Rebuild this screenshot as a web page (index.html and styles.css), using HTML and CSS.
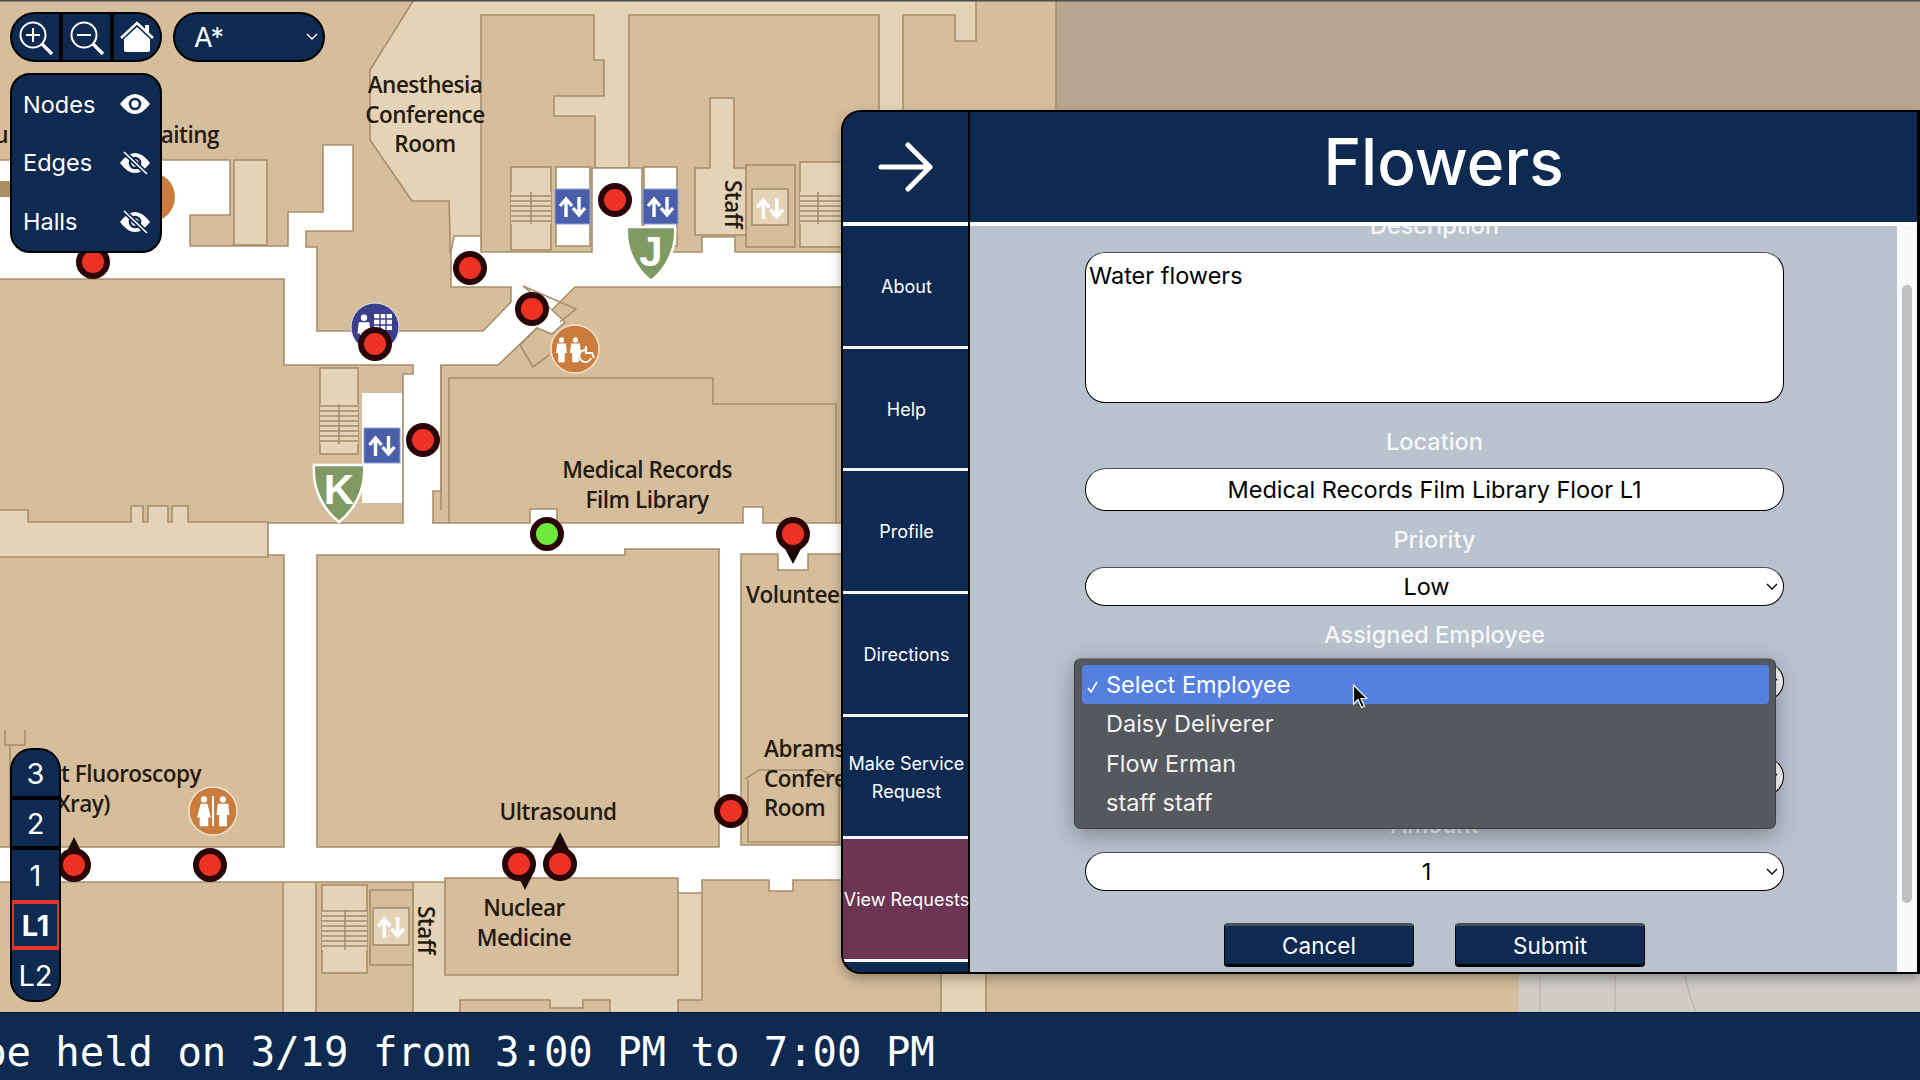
FILE: index.html
```html
<!DOCTYPE html>
<html lang="en">
<head>
<meta charset="utf-8">
<title>Flowers</title>
<link rel="stylesheet" href="styles.css">
</head>
<body>
<div class="app">
  <main class="map">
    <svg class="floorplan" viewBox="0 0 1920 1012" width="1920" height="1012" xmlns="http://www.w3.org/2000/svg">
      <defs>
        <pattern id="stairs" width="6" height="5" patternUnits="userSpaceOnUse"><rect width="6" height="5" class="f-light"/><line x1="0" y1="1" x2="6" y2="1" class="w-line"/></pattern>
        <symbol id="updown" viewBox="0 0 35 35"><path class="arrow" d="M11 28V13M5 17l6-7 6 7"/><path class="arrow" d="M24 8V23M18 19l6 7 6-7"/></symbol>
        <symbol id="person-m" viewBox="0 0 16 36"><circle cx="8" cy="4" r="3.6"/><path d="M2 9h12l1.5 13h-3v13h-9V22H.5z"/></symbol>
        <symbol id="person-f" viewBox="0 0 16 36"><circle cx="8" cy="4" r="3.6"/><path d="M4 9h8l4 16h-3v10H3V25H0z"/></symbol>
      </defs>
      <rect width="1920" height="1012" class="f-room"/>
      <rect x="1056" y="-2" width="870" height="400" class="f-dim w-line"/>
      <rect x="1519" y="960" width="410" height="60" class="f-grey"/>
      <path class="w-grey" d="M1540 975V1012M1615 975V1012M1685 975Q1690 1000 1696 1012"/>

      <path class="f-light w-line" d="M415 -2H976V41H955V15H903V120H879V15H629V168H595V116H554V96H604V60H594V15H481V252H450V236L449 201H412L370 140V70Z"/>
      <path class="f-light w-line" d="M695 168H710V98H734V168H746V235H695Z"/>
      <path class="f-light w-line" d="M-2 510H28V522H131V506H143V522H148V506H168V522H172V506H188V522H268V557H-2Z"/>
      <path class="f-light w-line" d="M283 880H316V1014H283ZM413 880H445V975H678V890H702V1000H678V1014H610V1000H583V1008H550V1000H460V1014H413ZM941 970H986V1014H941Z"/>

      <path class="f-white w-line" d="M-2 160H230V215H190V246H288V212H323V145H353V231H306V247H317V331H483L511 302V287H451V252L454 236H481V252H592V168H642V252H702V237H735V252H860V287H575L552 310L565 322L552 334L537 328L498 365H441V491H433V523H530V509H557V523H743V507H763V523H860V554H808V570H778V554H741V845H860V880H793V891H769V880H702V893H678V878H445V882H-2V847H284V555H268V523H403V374H413V365H284V279H-2Z"/>
      <path class="f-room w-line" d="M317 555H625V549H719V847H317Z"/>
      <rect x="234" y="160" width="33" height="85" class="f-light w-line"/>
      <rect x="-2" y="181" width="12" height="16" class="f-mark"/>
      <path class="o-line" d="M449 523V378H713V404H836V523M441 365V510M745 779L759 770H822L839 779V845M748 779V842H840"/>
      <path class="o-line" d="M5 730V745H25V730M10 745V847M523 286L576 309L560 322M523 286L551 309M537 328L520 345L533 367L549 355"/>

      <rect x="511" y="167" width="40" height="83" class="f-light w-line"/>
      <rect x="511" y="192" width="40" height="32" fill="url(#stairs)"/>
      <path class="o-line" d="M531 192V224"/>
      <rect x="556" y="167" width="34" height="79" class="f-white w-line"/>
      <rect x="644" y="167" width="33" height="79" class="f-white w-line"/>
      <rect x="555" y="189" width="35" height="35" class="f-blue"/><use href="#updown" x="555" y="189" width="35" height="35"/>
      <rect x="643" y="189" width="35" height="35" class="f-blue"/><use href="#updown" x="643" y="189" width="35" height="35"/>
      <rect x="746" y="165" width="49" height="82" class="f-room w-line"/>
      <rect x="752" y="189" width="36" height="36" class="f-light w-line"/><use href="#updown" x="752" y="190" width="36" height="36"/>
      <rect x="800" y="162" width="44" height="85" class="f-light w-line"/>
      <rect x="800" y="192" width="44" height="32" fill="url(#stairs)"/>
      <path class="o-line" d="M818 192V224"/>

      <rect x="320" y="368" width="38" height="86" class="f-light w-line"/>
      <rect x="320" y="404" width="38" height="40" fill="url(#stairs)"/>
      <path class="o-line" d="M339 404V444"/>
      <rect x="362" y="393" width="40" height="110" class="f-white"/>
      <rect x="364" y="428" width="36" height="35" class="f-blue"/><use href="#updown" x="364" y="428" width="36" height="35"/>

      <rect x="322" y="885" width="45" height="88" class="f-light w-line"/>
      <rect x="322" y="910" width="45" height="40" fill="url(#stairs)"/>
      <path class="o-line" d="M345 910V950"/>
      <rect x="370" y="890" width="43" height="75" class="f-room w-line"/>
      <rect x="373" y="908" width="36" height="37" class="f-light w-line"/><use href="#updown" x="373" y="909" width="36" height="36"/>

      <path class="f-green w-white" d="M627 227H675C677 250 665 270 651 281C637 270 625 250 627 227Z"/>
      <text class="shield-l" x="651" y="266">J</text>
      <path class="f-green w-white" d="M314 465C330 465 348 465 364 465C366 490 354 510 339 522C324 510 312 490 314 465Z"/>
      <text class="shield-l" x="339" y="504">K</text>

      <circle cx="150" cy="197" r="25" class="f-orange"/>
      <g>
        <circle cx="375" cy="327" r="24" class="f-indigo"/>
        <use href="#person-m" x="357" y="314" width="14" height="32" class="fig"/>
        <path class="f-white" d="M374 314h18v16h-18z"/>
        <path class="grid-l" d="M380 314v16M386 314v16M374 319h18M374 325h18"/>
      </g>
      <g>
        <circle cx="575" cy="349" r="24" class="f-orange w-soft"/>
        <use href="#person-m" x="555" y="337" width="13" height="26" class="fig"/>
        <use href="#person-m" x="569" y="337" width="13" height="26" class="fig"/>
        <path class="wheel" d="M585 350a6 6 0 1 0 6 8M586 346v7h6l2 5"/>
      </g>
      <g>
        <circle cx="213" cy="811" r="24" class="f-orange w-soft"/>
        <use href="#person-f" x="197" y="796" width="14" height="31" class="fig"/>
        <rect x="212" y="796" width="2" height="30" class="fig"/>
        <use href="#person-m" x="216" y="796" width="14" height="31" class="fig"/>
      </g>

      <text class="lbl" x="425" y="93">Anesthesia</text>
      <text class="lbl" x="425" y="123">Conference</text>
      <text class="lbl" x="425" y="152">Room</text>
      <text class="lbl end" x="219" y="143">Waiting</text>
      <text class="lbl end" x="8" y="143">u</text>
      <text class="lbl" x="647" y="478">Medical Records</text>
      <text class="lbl" x="647" y="508">Film Library</text>
      <text class="lbl start" x="746" y="603">Volunteer</text>
      <text class="lbl start" x="764" y="757">Abrams</text>
      <text class="lbl start" x="764" y="787">Conference</text>
      <text class="lbl start" x="764" y="816">Room</text>
      <text class="lbl" x="558" y="820">Ultrasound</text>
      <text class="lbl" x="524" y="916">Nuclear</text>
      <text class="lbl" x="524" y="946">Medicine</text>
      <text class="lbl end" x="201" y="782">o  t Fluoroscopy</text>
      <text class="lbl end" x="110" y="812">(Xray)</text>
      <text class="lbl" transform="translate(725 204) rotate(90)">Staff</text>
      <text class="lbl" transform="translate(418 930) rotate(90)">Staff</text>

      <path class="pin-tip" d="M74 837L64 857H84Z"/>
      <path class="pin-tip" d="M560 832L550 852H570Z"/>
      <path class="pin-tip" d="M525 890L515 870H535Z"/>
      <path class="pin-tip" d="M793 564L783 545H803Z"/>
      <circle cx="93" cy="262" r="14" class="dot"/>
      <circle cx="470" cy="268" r="14" class="dot"/>
      <circle cx="615" cy="200" r="14" class="dot"/>
      <circle cx="532" cy="309" r="14" class="dot"/>
      <circle cx="375" cy="344" r="14" class="dot"/>
      <circle cx="423" cy="440" r="14" class="dot"/>
      <circle cx="547" cy="534" r="14" class="dot dot-green"/>
      <circle cx="793" cy="534" r="14" class="dot"/>
      <circle cx="74" cy="865" r="14" class="dot"/>
      <circle cx="210" cy="865" r="14" class="dot"/>
      <circle cx="519" cy="864" r="14" class="dot"/>
      <circle cx="560" cy="864" r="14" class="dot"/>
      <circle cx="731" cy="811" r="14" class="dot"/>
      <rect width="1920" height="1.5" class="f-topline"/>
    </svg>

    <div class="tools">
      <div class="zoombar">
        <button class="tool-btn" type="button" aria-label="Zoom in">
          <svg viewBox="0 0 50 50" width="50" height="50"><circle cx="23" cy="23" r="12.5" class="i-thin"/><path class="i-thin" d="M23 16v14M16 23h14"/><path class="i-thick" d="M32 32l10 10"/></svg>
        </button>
        <button class="tool-btn" type="button" aria-label="Zoom out">
          <svg viewBox="0 0 50 50" width="50" height="50"><circle cx="23" cy="23" r="12.5" class="i-thin"/><path class="i-thin" d="M16 23h14"/><path class="i-thick" d="M32 32l10 10"/></svg>
        </button>
        <button class="tool-btn" type="button" aria-label="Home">
          <svg viewBox="0 0 50 50" width="50" height="50"><path class="i-fill" d="M12 27L25 15L38 27V38Q38 40 36 40H14Q12 40 12 38Z"/><path class="i-roof" d="M9 26L25 11L41 26"/><path class="i-fill" d="M33 13h4v8h-4z"/></svg>
        </button>
      </div>
      <div class="algo"><span>A*</span><svg class="chev" viewBox="0 0 12 8" width="12" height="8"><path d="M1 1l5 5 5-5"/></svg></div>
    </div>

    <div class="layers">
      <div class="layer-row"><span>Nodes</span>
        <svg viewBox="0 0 30 20" width="30" height="20"><path class="i-fill" d="M0 10Q15 -10 30 10Q15 30 0 10Z"/><circle cx="15" cy="10" r="5" class="i-pupil"/></svg>
      </div>
      <div class="layer-row"><span>Edges</span>
        <svg viewBox="0 0 30 24" width="30" height="24"><path class="i-fill" d="M0 12Q15 -8 30 12Q15 32 0 12Z"/><circle cx="15" cy="12" r="5" class="i-pupil"/><path class="i-slash-b" d="M4 1L27 23"/><path class="i-slash" d="M4 1L27 23"/></svg>
      </div>
      <div class="layer-row"><span>Halls</span>
        <svg viewBox="0 0 30 24" width="30" height="24"><path class="i-fill" d="M0 12Q15 -8 30 12Q15 32 0 12Z"/><circle cx="15" cy="12" r="5" class="i-pupil"/><path class="i-slash-b" d="M4 1L27 23"/><path class="i-slash" d="M4 1L27 23"/></svg>
      </div>
    </div>

    <div class="floors">
      <div class="floor floor-sep">3</div>
      <div class="floor floor-sep">2</div>
      <div class="floor">1</div>
      <div class="floor floor-on">L1</div>
      <div class="floor">L2</div>
    </div>

    <section class="modal">
      <nav class="side">
        <div class="back">
          <svg viewBox="0 0 56 50" width="56" height="50"><path d="M3 25H52M30 3L52 25L30 47"/></svg>
        </div>
        <a class="side-item">About</a>
        <a class="side-item">Help</a>
        <a class="side-item">Profile</a>
        <a class="side-item">Directions</a>
        <a class="side-item">Make Service Request</a>
        <a class="side-item side-on">View Requests</a>
      </nav>
      <div class="main">
        <header class="title"><h1>Flowers</h1></header>
        <div class="content">
          <form class="form">
            <label class="lab lab-first">Description</label>
            <div class="box area">Water flowers</div>
            <label class="lab lab-wide">Location</label>
            <div class="box input">Medical Records Film Library Floor L1</div>
            <label class="lab">Priority</label>
            <div class="box select"><span>Low</span><svg class="chev-d" viewBox="0 0 12 8" width="12" height="8"><path d="M1 1l5 5 5-5"/></svg></div>
            <label class="lab">Assigned Employee</label>
            <div class="box select"><svg class="chev-d" viewBox="0 0 12 8" width="12" height="8"><path d="M1 1l5 5 5-5"/></svg></div>
            <label class="lab">Type</label>
            <div class="box select"><svg class="chev-d" viewBox="0 0 12 8" width="12" height="8"><path d="M1 1l5 5 5-5"/></svg></div>
            <label class="lab">Amount</label>
            <div class="box select"><span>1</span><svg class="chev-d" viewBox="0 0 12 8" width="12" height="8"><path d="M1 1l5 5 5-5"/></svg></div>
            <div class="actions">
              <button class="btn" type="button">Cancel</button>
              <button class="btn" type="button">Submit</button>
            </div>
          </form>
          <div class="scrollbar"><div class="thumb"></div></div>
          <ul class="menu">
            <li class="opt opt-on"><svg viewBox="0 0 12 12" width="12" height="12"><path d="M1 7l3 4 6-10"/></svg>Select Employee</li>
            <li class="opt">Daisy Deliverer</li>
            <li class="opt">Flow Erman</li>
            <li class="opt">staff staff</li>
          </ul>
          <svg class="cursor" viewBox="0 0 16 26" width="16" height="26"><path d="M1.5 1V20L6 15.5L9.5 23.5L12.5 22.2L9 14.5H15Z"/></svg>
        </div>
      </div>
    </section>
  </main>
  <footer class="ticker"><p>be held on 3/19 from 3:00 PM to 7:00 PM</p></footer>
</div>
</body>
</html>
```
FILE: styles.css
```css
* { box-sizing: border-box; }
html, body { margin: 0; padding: 0; }
body { width: 1920px; height: 1080px; overflow: hidden; font-family: Inter, "Liberation Sans", sans-serif; background: #0f2a50; }
.app { display: flex; flex-direction: column; width: 1920px; height: 1080px; }
.map { position: relative; flex: 0 0 1012px; height: 1012px; overflow: hidden; background: #d6bd9c; }
.floorplan { position: absolute; left: 0; top: 0; display: block; }

/* floor plan paint */
.f-room { fill: #d6bd9c; }
.f-light { fill: #e4d3b7; }
.f-white { fill: #fff; }
.f-dim { fill: #b8a790; }
.f-grey { fill: #cfccc6; }
.f-blue { fill: #4a5fa9; stroke: #8f9fd0; stroke-width: 1; }
.f-mark { fill: #a98f65; }
.f-green { fill: #7f9b63; }
.f-orange { fill: #c97c3d; }
.f-indigo { fill: #3d3e8c; stroke: #e8e4ea; stroke-width: 1; }
.f-topline { fill: #4a4a4c; }
.w-line { stroke: #a88f6b; stroke-width: 1.6; }
.w-grey { fill: none; stroke: #bdb9b2; stroke-width: 1.5; }
.w-white { stroke: #fff; stroke-width: 2.5; }
.w-soft { stroke: #f3e2cf; stroke-width: 1.5; }
.o-line { fill: none; stroke: #a88f6b; stroke-width: 1.6; }
.arrow { fill: none; stroke: #fff; stroke-width: 3.4; }
.fig { fill: #fff; }
.wheel { fill: none; stroke: #fff; stroke-width: 2; }
.grid-l { fill: none; stroke: #3d3e8c; stroke-width: 1.4; }
.shield-l { font-family: "Liberation Sans", sans-serif; font-weight: 700; font-size: 42px; fill: #fff; text-anchor: middle; }
.lbl { font-family: "Open Sans", "Noto Sans", sans-serif; font-size: 22.5px; font-weight: 600; fill: #241b12; text-anchor: middle; letter-spacing: -0.5px; }
.lbl.start { text-anchor: start; }
.lbl.end { text-anchor: end; }
.dot { fill: #ec3323; stroke: #2a0507; stroke-width: 6; }
.dot-green { fill: #6fe83c; }
.pin-tip { fill: #1c0a08; }

/* toolbar */
.tools { position: absolute; left: 10px; top: 12px; display: flex; gap: 11px; }
.zoombar { display: flex; width: 152px; height: 50px; border: 2px solid #000; border-radius: 25px; overflow: hidden; background: #0f2a50; }
.tool-btn { flex: 0 0 47px; min-width: 0; border: 0; padding: 0; background: transparent; overflow: visible; position: relative; }
.tool-btn svg { position: absolute; left: -2px; top: -2px; }
.tool-btn + .tool-btn { flex-basis: 51px; border-left: 4px solid #000; }
.i-thin { fill: none; stroke: #fff; stroke-width: 2; }
.i-thick { fill: none; stroke: #fff; stroke-width: 3.4; }
.i-fill { fill: #fff; }
.i-roof { fill: none; stroke: #fff; stroke-width: 2.4; }
.i-pupil { fill: #fff; stroke: #0f2a50; stroke-width: 2.6; }
.i-slash { fill: none; stroke: #fff; stroke-width: 1.6; }
.i-slash-b { fill: none; stroke: #0f2a50; stroke-width: 5; }
.algo { position: relative; display: flex; align-items: center; width: 152px; height: 50px; padding-left: 19px; border: 2px solid #000; border-radius: 25px; background: #0f2a50; color: #fff; font-size: 27px; }
.chev { position: absolute; right: 5px; top: 19px; }
.chev path { fill: none; stroke: #fff; stroke-width: 1.4; }

/* layers */
.layers { position: absolute; left: 10px; top: 73px; display: flex; flex-direction: column; justify-content: space-around; width: 152px; height: 180px; padding: 0 10px 0 11px; border: 2px solid #000; border-radius: 20px; background: #0f2a50; color: #fff; font-size: 23.5px; }
.layer-row { display: flex; align-items: center; justify-content: space-between; height: 48px; }

/* floor selector */
.floors { position: absolute; left: 10px; top: 748px; display: flex; flex-direction: column; width: 51px; height: 254px; border: 2px solid #000; border-radius: 22px; overflow: hidden; background: #0f2a50; color: #fff; font-size: 29px; }
.floor { flex: 0 0 50px; display: flex; align-items: center; justify-content: center; background: #0f2a50; }
.floor-sep { border-bottom: 4px solid #000; }
.floor-on { border: 4px solid #e8342a; font-weight: 700; margin-left: -2px; margin-right: -2px; }

/* modal */
.modal { position: absolute; left: 841px; top: 110px; display: flex; width: 1079px; height: 864px; border: 2px solid #000; border-right-width: 3px; border-radius: 20px 0 0 20px; overflow: hidden; background: #0f2a50; box-shadow: 0 5px 12px rgba(0, 0, 0, .3); }
.side { display: flex; flex-direction: column; flex: 0 0 127px; width: 127px; border-right: 2px solid #000; background: #0f2a50; }
.back { display: flex; align-items: center; justify-content: center; flex: 0 0 114px; border-bottom: 4px solid #fff; }
.back path { fill: none; stroke: #fff; stroke-width: 5; stroke-linecap: round; stroke-linejoin: round; }
.side-item { display: flex; align-items: center; justify-content: center; flex: 0 0 122.7px; padding: 2px 0 0 2px; border-bottom: 3px solid #f4f6f8; color: #fff; font-size: 18px; line-height: 28px; text-align: center; white-space: normal; }
.side-on { background: #6b3553; white-space: nowrap; }
.main { flex: 1; display: flex; flex-direction: column; min-width: 0; }
.title { flex: 0 0 114px; display: flex; align-items: center; justify-content: center; border-bottom: 4px solid #fff; background: #0f2a50; }
.title h1 { margin: 0; color: #fff; font-size: 64px; font-weight: 500; line-height: 1; padding-bottom: 10px; }
.content { position: relative; flex: 1; overflow: hidden; background: #b9c3ce; }
.form { display: flex; flex-direction: column; width: 699px; margin: -15px 0 0 115px; }
.lab { display: block; height: 30px; margin: 14px 0 12px; color: #f4f6f8; font-size: 23.5px; font-weight: 500; line-height: 30px; text-align: center; }
.lab-first { margin: 0 0 11px; }
.lab-wide { margin: 24px 0 11px; }
.box { background: #fff; border: 1.5px solid #000; border-top-color: #4a5058; color: #000; font-size: 23.5px; }
.area { height: 151px; padding: 8px 3px; border-radius: 20px; line-height: 29px; }
.input { height: 43px; border-radius: 21px; text-align: center; line-height: 42px; }
.select { position: relative; height: 39.1px; border-radius: 19.5px; text-align: center; line-height: 38px; padding-right: 16px; }
.chev-d { position: absolute; right: 5px; top: 15px; }
.chev-d path { fill: none; stroke: #000; stroke-width: 1.3; }
.actions { display: flex; justify-content: center; gap: 41px; margin-top: 32px; }
.btn { width: 190px; height: 44px; border: 1.5px solid #000; border-top: 3px solid #4a5058; border-bottom: 3px solid #000; border-radius: 4px; background: #0f2a50; color: #fff; font-family: Inter, sans-serif; font-size: 22.5px; }
.scrollbar { position: absolute; right: 0; top: 0; bottom: 0; width: 20px; padding: 59px 5px 0; background: #f8f9fa; }
.thumb { width: 10px; height: 618px; border-radius: 5px; background: #c0c0c0; }
.menu { position: absolute; left: 104px; top: 432px; width: 702px; height: 171px; margin: 0; padding: 6px 6px 0 7px; list-style: none; border: 1px solid #3b3f45; border-top-color: #73777c; border-radius: 7px; background: #55585f; box-shadow: 0 6px 22px rgba(0, 0, 0, .32); color: #f2f2ee; font-size: 23.5px; }
.opt { position: relative; height: 39.3px; padding-left: 24px; line-height: 39px; }
.opt svg { position: absolute; left: 5px; top: 16px; }
.opt svg path { fill: none; stroke: #fff; stroke-width: 1.6; }
.opt-on { border-radius: 4px; background: #5580e0; color: #fff; }
.cursor { position: absolute; left: 382px; top: 458px; }
.cursor path { fill: #000; stroke: #fff; stroke-width: 1.2; }

/* ticker */
.ticker { flex: 1; overflow: hidden; background: #0f2a50; border-top: 1px solid #0a1c38; }
.ticker p { margin: 0; text-indent: -18px; color: #fff; font-family: "DejaVu Sans Mono", monospace; font-size: 40.6px; line-height: 78px; white-space: pre; }
```
